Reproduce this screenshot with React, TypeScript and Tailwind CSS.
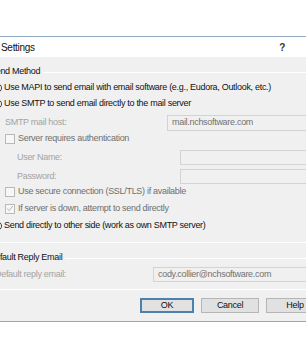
import { ReactNode } from 'react'

const Radio = () => (
	<span className="-ml-[8px] mr-[2px] inline-block h-[10px] w-[10px] shrink-0 rounded-full border border-[#3a3a3a] bg-white" />
)

const Check = ({ checked = false }: { checked?: boolean }) => (
	<span className="ml-[5px] mr-[3px] flex h-[10px] w-[10px] shrink-0 items-center justify-center border border-[#b9b9b9] bg-[#f7f7f7]">
		{checked && (
			<svg viewBox="0 0 10 10" className="h-[9px] w-[9px]" fill="none">
				<path d="M1.5 5.2 L4 7.6 L8.6 1.8" stroke="#a8a8a8" strokeWidth="1.1" />
			</svg>
		)}
	</span>
)

const Field = ({ value = '' }: { value?: string }) => (
	<div className="flex h-full w-[180px] shrink-0 items-center border border-[#d3d3d3] bg-[#f0f0f0] pl-[4px] text-[#707070]">
		{value}
	</div>
)

const GroupTitle = ({ children, offset }: { children: ReactNode; offset: string }) => (
	<div className="flex h-[16px] items-center">
		<span className={`${offset} pr-[3px] text-[#111]`}>{children}</span>
		<span className="h-px flex-1 border-b border-white bg-[#d6d6d6]" />
	</div>
)

export default function App() {
	return (
		<div className="flex h-[361px] w-[306px] flex-col overflow-hidden bg-white font-['Liberation_Sans',sans-serif] text-[9px] tracking-[-0.3px] text-[#111]">
			<div className="h-[36px] shrink-0" />
			<div className="flex shrink-0 flex-col border-y border-[#8fa9c2] bg-[#f0f0f0]">
				<div className="flex h-[20px] items-center justify-between bg-white pl-[1px] pr-[21px] text-[10px]">
					<span>Settings</span>
					<span className="font-bold text-[#333]">?</span>
				</div>

				<div className="flex flex-col pt-[7px]">
					<GroupTitle offset="-ml-[10px]">Send Method</GroupTitle>
					<div className="flex h-[16px] items-center">
						<Radio />
						<span>Use MAPI to send email with email software (e.g., Eudora, Outlook, etc.)</span>
					</div>
					<div className="flex h-[16px] items-center">
						<Radio />
						<span>Use SMTP to send email directly to the mail server</span>
					</div>
					<div className="mt-[3px] flex h-[16px] items-center">
						<span className="ml-[5px] w-[162px] shrink-0 text-[#a3a3a3]">SMTP mail host:</span>
						<Field value="mail.nchsoftware.com" />
					</div>
					<div className="flex h-[16px] items-center">
						<Check />
						<span className="text-[#6f6f6f]">Server requires authentication</span>
					</div>
					<div className="mt-[3px] flex h-[15px] items-center">
						<span className="ml-[17px] w-[163px] shrink-0 text-[#a3a3a3]">User Name:</span>
						<Field />
					</div>
					<div className="mt-[4px] flex h-[15px] items-center">
						<span className="ml-[17px] w-[163px] shrink-0 text-[#a3a3a3]">Password:</span>
						<Field />
					</div>
					<div className="flex h-[16px] items-center">
						<Check />
						<span className="text-[#6f6f6f]">Use secure connection (SSL/TLS) if available</span>
					</div>
					<div className="flex h-[17px] items-center">
						<Check checked />
						<span className="text-[#6f6f6f]">If server is down, attempt to send directly</span>
					</div>
					<div className="flex h-[17px] items-center">
						<Radio />
						<span>Send directly to other side (work as own SMTP server)</span>
					</div>
					<div className="mt-[8px] h-px border-b border-white bg-[#d6d6d6]" />

					<div className="mt-[7px]">
						<GroupTitle offset="-ml-[11px]">Default Reply Email</GroupTitle>
					</div>
					<div className="mt-[1px] flex h-[15px] items-center">
						<span className="-ml-[5px] w-[158px] shrink-0 text-[#a3a3a3]">Default reply email:</span>
						<Field value="cody.collier@nchsoftware.com" />
					</div>
					<div className="mt-[7px] h-px border-b border-white bg-[#d6d6d6]" />

					<div className="mt-[8px] mb-[8px] flex h-[15px] items-stretch pl-[140px]">
						<div className="flex w-[54px] shrink-0 items-center justify-center border-2 border-[#4a82ad] bg-[#e1e1e1]">OK</div>
						<div className="ml-[7px] flex w-[58px] shrink-0 items-center justify-center border border-[#b5b5b5] bg-[#e1e1e1]">Cancel</div>
						<div className="ml-[7px] flex w-[58px] shrink-0 items-center justify-center border border-[#b5b5b5] bg-[#e1e1e1]">Help</div>
					</div>
				</div>
			</div>
			<div className="flex-1" />
		</div>
	)
}
